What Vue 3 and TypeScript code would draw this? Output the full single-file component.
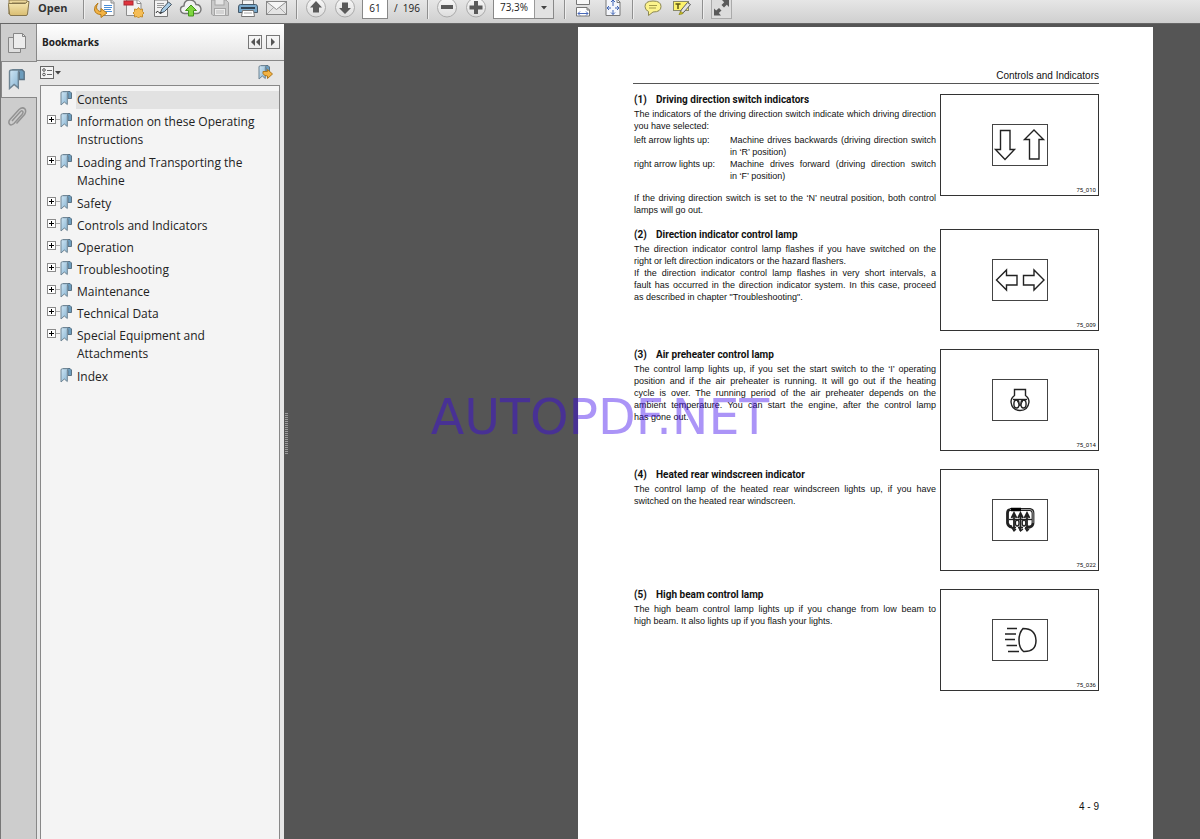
<script setup lang="ts">
import { ref } from 'vue'

interface Bookmark {
  title: string[]
  expandable: boolean
}

interface Term {
  name: string
  lines: string[]
}

interface Section {
  num: number
  title: string
  figure: string
  code: string
  paragraphs: string[][]
  terms?: Term[]
  closing?: string[]
}

const pageNumber = ref('61')
const zoomLevel = ref('73,3%')
const selected = ref(0)

const bookmarks: Bookmark[] = [
  { title: ['Contents'], expandable: false },
  { title: ['Information on these Operating', 'Instructions'], expandable: true },
  { title: ['Loading and Transporting the', 'Machine'], expandable: true },
  { title: ['Safety'], expandable: true },
  { title: ['Controls and Indicators'], expandable: true },
  { title: ['Operation'], expandable: true },
  { title: ['Troubleshooting'], expandable: true },
  { title: ['Maintenance'], expandable: true },
  { title: ['Technical Data'], expandable: true },
  { title: ['Special Equipment and', 'Attachments'], expandable: true },
  { title: ['Index'], expandable: false },
]

const sections: Section[] = [
  {
    num: 1,
    title: 'Driving direction switch indicators',
    figure: 'updown',
    code: '75_010',
    paragraphs: [
      ['The indicators of the driving direction switch indicate which driving direction', 'you have selected:'],
    ],
    terms: [
      { name: 'left arrow lights up:', lines: ['Machine drives backwards (driving direction switch', 'in ‘R’ position)'] },
      { name: 'right arrow lights up:', lines: ['Machine drives forward (driving direction switch', 'in ‘F’ position)'] },
    ],
    closing: ['If the driving direction switch is set to the ‘N’ neutral position, both control', 'lamps will go out.'],
  },
  {
    num: 2,
    title: 'Direction indicator control lamp',
    figure: 'leftright',
    code: '75_009',
    paragraphs: [
      ['The direction indicator control lamp flashes if you have switched on the', 'right or left direction indicators or the hazard flashers.'],
      ['If the direction indicator control lamp flashes in very short intervals, a', 'fault has occurred in the direction indicator system. In this case, proceed', 'as described in chapter "Troubleshooting".'],
    ],
  },
  {
    num: 3,
    title: 'Air preheater control lamp',
    figure: 'preheater',
    code: '75_014',
    paragraphs: [
      ['The control lamp lights up, if you set the start switch to the ‘I’ operating', 'position and if the air preheater is running. It will go out if the heating', 'cycle is over. The running period of the air preheater depends on the', 'ambient temperature. You can start the engine, after the control lamp', 'has gone out.'],
    ],
  },
  {
    num: 4,
    title: 'Heated rear windscreen indicator',
    figure: 'windscreen',
    code: '75_022',
    paragraphs: [
      ['The control lamp of the heated rear windscreen lights up, if you have', 'switched on the heated rear windscreen.'],
    ],
  },
  {
    num: 5,
    title: 'High beam control lamp',
    figure: 'beam',
    code: '75_036',
    paragraphs: [
      ['The high beam control lamp lights up if you change from low beam to', 'high beam. It also lights up if you flash your lights.'],
    ],
  },
]
</script>

<template>
  <div class="app">
    <svg class="defs" aria-hidden="true">
      <defs>
        <linearGradient id="blue" x1="0" y1="0" x2="1" y2="1">
          <stop offset="0" stop-color="#cfe6f4" />
          <stop offset="1" stop-color="#86b3d2" />
        </linearGradient>
        <linearGradient id="folder" x1="0" y1="0" x2="0" y2="1">
          <stop offset="0" stop-color="#f7e9b4" />
          <stop offset="1" stop-color="#d9bd72" />
        </linearGradient>
        <linearGradient id="disc" x1="0" y1="0" x2="0" y2="1">
          <stop offset="0" stop-color="#fafafa" />
          <stop offset="1" stop-color="#dcdcdc" />
        </linearGradient>
        <symbol id="ribbon" viewBox="0 0 12 15">
          <path d="M3 .5H10L11.500 2V7.500H8V2.500Z" fill="#6d9dbd" stroke="#5b7385" />
          <path d="M1 2Q1 .7 2.500 .7H8Q7.300 1.500 7.300 3V13.500L4.300 11L1 14Z" fill="url(#blue)" stroke="#6e8493" />
        </symbol>
      </defs>
    </svg>

    <header class="toolbar">
      <button class="open" type="button">
        <svg width="26" height="20" viewBox="0 0 26 20">
          <path d="M2 0V14L5 3H20V0Z" fill="#ead69a" stroke="#8f7d4f" />
          <path d="M1.500 4.500Q1 3.500 2 3.500H18.500L20.500 1.500H22L20.500 14Q20.300 15.500 19 15.500H4Q2.800 15.500 2.500 14Z" fill="url(#folder)" stroke="#85754c" />
        </svg>
        <span>Open</span>
      </button>
      <span class="sep"></span>
      <div class="group files">
        <button type="button" aria-label="Export">
          <svg width="24" height="20" viewBox="0 0 24 20">
            <path d="M8 0H18.500L21 2.500V15.500H8Z" fill="#fff" stroke="#888" />
            <path d="M18 0V3H21" fill="#ddd" stroke="#888" />
            <path d="M11 5.500H19M11 7.500H19M11 9.500H18M11 11.500H19" stroke="#4c8fd6" />
            <path d="M5 3Q2 8 5 10.500Q6 11.500 8 11.500V8.500L14 13L8 17.500V14.500Q2.500 14.500 1.500 10Q1 6 5 3Z" fill="#f3b344" stroke="#b57b1b" />
          </svg>
        </button>
        <button type="button" aria-label="Create PDF">
          <svg width="24" height="20" viewBox="0 0 24 20">
            <path d="M4.500 0H15L19 3V15.500H4.500Z" fill="#f2f2f2" stroke="#8d8d8d" />
            <path d="M15 0V3.500H19" fill="#fff" stroke="#8d8d8d" />
            <rect x="2" y="1" width="9" height="4" fill="#e0333d" stroke="#ad2730" />
            <path d="M16.500 7.500L18 9.500L20.500 9L20.500 11.500L22 13L20.500 14.500V17L18 16.500L16.500 18L15 16.500L12.500 17V14.500L11 13L12.500 11.500V9L15 9.500Z" fill="#f5bd55" stroke="#c38d2e" />
          </svg>
        </button>
        <button type="button" aria-label="Sign">
          <svg width="24" height="20" viewBox="0 0 24 20">
            <path d="M4.500 0H17.500V16.500H4.500Z" fill="#f3f3f3" stroke="#777" />
            <path d="M7 3.500H14M7 5.500H14M7 7.500H12" stroke="#999" />
            <path d="M10 13.500L12 9L18.500 2L21.500 4.500L14.500 11.500Z" fill="#a8cbe4" stroke="#46535e" />
            <path d="M6 13Q7 10 8.500 12T12 12.500" fill="none" stroke="#333" />
          </svg>
        </button>
        <button type="button" aria-label="Upload to cloud">
          <svg width="24" height="20" viewBox="0 0 24 20">
            <path d="M5.500 13.500Q1.500 13 1.500 9.500Q1.500 6.500 5 6Q5 0 11 0Q16 0 17 4.500Q21.500 4.500 22 9Q22 13 18 13.500Z" fill="#f1f1f1" stroke="#777" stroke-width="1.400" />
            <path d="M12 5L17.500 10.500H14.500V16H9.500V10.500H6.500Z" fill="#7fd63f" stroke="#43951a" />
          </svg>
        </button>
        <button type="button" aria-label="Save" disabled>
          <svg width="24" height="20" viewBox="0 0 24 20">
            <path d="M3.500 0H18L20.500 2.500V15.500H5L3.500 14Z" fill="#c9c9c9" stroke="#a2a2a2" />
            <rect x="7" y="-1" width="9" height="6" fill="#e5e5e5" stroke="#a6a6a6" />
            <rect x="6.500" y="8.500" width="11" height="7" fill="#ececec" stroke="#a6a6a6" />
            <path d="M8 11H16M8 13H16" stroke="#bbb" />
          </svg>
        </button>
        <button type="button" aria-label="Print">
          <svg width="24" height="20" viewBox="0 0 24 20">
            <path d="M6.500 0H17.500V5H6.500Z" fill="#f6f6f6" stroke="#777" />
            <path d="M4.500 4.500H19.500Q21.500 4.500 21.500 7V12.500H2.500V7Q2.500 4.500 4.500 4.500Z" fill="#79a9cc" stroke="#44596a" />
            <path d="M5 8H19" stroke="#304252" stroke-width="2" />
            <path d="M6.500 10.500H17.500L18.500 16.500H5.500Z" fill="#fff" stroke="#777" />
            <path d="M8 13H16" stroke="#aaa" />
          </svg>
        </button>
        <button type="button" aria-label="E-mail">
          <svg width="24" height="20" viewBox="0 0 24 20">
            <rect x="1.500" y="1.500" width="20" height="13" fill="#e4e4e4" stroke="#868686" />
            <path d="M2 14L9 7M21 14L14 7" stroke="#aaa" fill="none" />
            <path d="M2 2L11.500 9.500L21 2" fill="#f5f5f5" stroke="#929292" />
          </svg>
        </button>
      </div>
      <span class="sep"></span>
      <div class="group nav">
        <button type="button" aria-label="Previous page">
          <svg width="24" height="20" viewBox="0 0 24 20">
            <circle cx="12" cy="7.500" r="9.500" fill="url(#disc)" stroke="#aaa" />
            <path d="M12 1L18 7.500H15V12.500H9V7.500H6Z" fill="#5a5a5a" />
          </svg>
        </button>
        <button type="button" aria-label="Next page">
          <svg width="24" height="20" viewBox="0 0 24 20">
            <circle cx="12" cy="7.500" r="9.500" fill="url(#disc)" stroke="#aaa" />
            <path d="M12 14L18 8H15V2.500H9V8H6Z" fill="#5a5a5a" />
          </svg>
        </button>
      </div>
      <input class="page-input" v-model="pageNumber" aria-label="Page number" />
      <span class="total">/&nbsp; 196</span>
      <span class="sep"></span>
      <div class="group nav">
        <button type="button" aria-label="Zoom out">
          <svg width="24" height="20" viewBox="0 0 24 20">
            <circle cx="12" cy="7.500" r="9.500" fill="url(#disc)" stroke="#aaa" />
            <rect x="6" y="5" width="12" height="4" fill="#5a5a5a" />
          </svg>
        </button>
        <button type="button" aria-label="Zoom in">
          <svg width="24" height="20" viewBox="0 0 24 20">
            <circle cx="12" cy="7.500" r="9.500" fill="url(#disc)" stroke="#aaa" />
            <path d="M10 1H14V5.500H18.500V9.500H14V14H10V9.500H5.500V5.500H10Z" fill="#5a5a5a" />
          </svg>
        </button>
      </div>
      <div class="zoom">
        <select v-model="zoomLevel" aria-label="Zoom level">
          <option>73,3%</option>
          <option>100%</option>
        </select>
        <span class="zoom-arrow"><svg width="8" height="4" viewBox="0 0 8 4"><path d="M1 0H7L4 3.500Z" fill="#444" /></svg></span>
      </div>
      <span class="sep"></span>
      <div class="group fit">
        <button type="button" aria-label="Fit width">
          <svg width="24" height="20" viewBox="0 0 24 20">
            <path d="M5.500 -1H18.500V4.500H5.500Z" fill="#f8f8f8" stroke="#777" />
            <path d="M5.500 7.500H16L18.500 10V16H5.500Z" fill="#fff" stroke="#777" />
            <path d="M16 7.500V10H18.500" fill="none" stroke="#777" />
            <path d="M7 13.500H17M9 11.500L7 13.500L9 15.500M15 11.500L17 13.500L15 15.500" fill="none" stroke="#4868b8" />
          </svg>
        </button>
        <button type="button" aria-label="Fit page">
          <svg width="24" height="20" viewBox="0 0 24 20">
            <path d="M5 -1H16L19 2V15.500H5Z" fill="#f4f6fb" stroke="#777" />
            <path d="M16 0V2.500H19" fill="none" stroke="#777" />
            <path d="M12 0V6M12 10V14.500M6 8H10M14 8H18M10 2L12 0L14 2M10 12.500L12 14.500L14 12.500M8 6L6 8L8 10M16 6L18 8L16 10" fill="none" stroke="#3f64b6" />
          </svg>
        </button>
      </div>
      <span class="sep"></span>
      <div class="group notes">
        <button type="button" aria-label="Comment">
          <svg width="24" height="20" viewBox="0 0 24 20">
            <path d="M12 1Q20 1 20 6.500Q20 12 12 12L7.500 15.500V11.500Q4 10 4 6.500Q4 1 12 1Z" fill="#fcf38c" stroke="#8c8752" />
            <path d="M8 5.500H16M8 8H15" stroke="#a39b4a" />
          </svg>
        </button>
        <button type="button" aria-label="Highlight text">
          <svg width="24" height="20" viewBox="0 0 24 20">
            <rect x="3.500" y="1.500" width="15" height="9" fill="#fdf36c" stroke="#8a8a6a" />
            <path d="M5.500 4H10.500M8 4V9" stroke="#5d5512" stroke-width="1.500" />
            <path d="M10 12L12 9L17.500 2.500L20.500 4.500L14 12L11 14Z" fill="#e2e2e2" stroke="#5e5e5e" />
            <path d="M9 14.500L11 11.500L13 13.500Z" fill="#e4d822" stroke="#9a9320" />
          </svg>
        </button>
      </div>
      <span class="sep"></span>
      <button class="full" type="button" aria-label="Full screen">
        <svg width="19" height="18" viewBox="1 0 19 18">
          <path d="M11 0H18V7L15.800 4.800L13 7.500L10.500 5L13.200 2.200Z" fill="#5a5a5a" />
          <path d="M3 8.500L5.200 10.500L8 8L10.500 10.500L7.800 13L10 15.500H3Z" fill="#5a5a5a" />
        </svg>
      </button>
    </header>

    <div class="body">
      <nav class="rail">
        <button type="button" aria-label="Page thumbnails">
          <svg width="20" height="22" viewBox="0 0 20 22">
            <path d="M1.500 5.500H13.500V20.500H1.500Z" fill="#dedede" stroke="#868686" />
            <path d="M6.500 1.500H15.500L18.500 4.500V16.500H6.500Z" fill="#ececec" stroke="#868686" />
            <path d="M15.500 1.500V4.500H18.500" fill="none" stroke="#868686" />
          </svg>
        </button>
        <button class="active" type="button" aria-label="Bookmarks">
          <svg width="17" height="21"><use href="#ribbon" /></svg>
        </button>
        <button type="button" aria-label="Attachments">
          <svg width="20" height="22" viewBox="0 0 20 22">
            <path d="M5 15L13.500 5.500Q15.500 4 16 6Q16.200 7 15 8.500L7 17.500Q4 20 2.500 18Q1 16 3 13.500L12 3.500Q15.500 .5 18 3Q19.500 5.500 17.500 8.500L9.500 17.500" fill="none" stroke="#929292" stroke-width="1.500" />
          </svg>
        </button>
      </nav>

      <aside class="panel">
        <div class="panel-head">
          <h2>Bookmarks</h2>
          <button type="button" aria-label="Collapse panel">
            <svg width="12" height="10" viewBox="0 0 12 10"><path d="M6 1V9L2 5ZM11 1V9L7 5Z" fill="#555" /></svg>
          </button>
          <button type="button" aria-label="Next panel">
            <svg width="12" height="10" viewBox="0 0 12 10"><path d="M4 1V9L8 5Z" fill="#555" /></svg>
          </button>
        </div>
        <div class="panel-tools">
          <button type="button" aria-label="Options">
            <svg width="22" height="14" viewBox="0 0 22 14">
              <rect x=".5" y=".5" width="13" height="12" fill="#f4f4f4" stroke="#666" />
              <circle cx="4" cy="4" r="1.300" fill="none" stroke="#555" />
              <circle cx="4" cy="8.500" r="1.300" fill="none" stroke="#555" />
              <path d="M7 4.500H12M7 8.500H12" stroke="#666" />
              <path d="M15 5H21L18 8.500Z" fill="#444" />
            </svg>
          </button>
          <button type="button" aria-label="Find current bookmark">
            <svg width="16" height="16" viewBox="0 0 16 16">
              <use href="#ribbon" width="12" height="15" />
              <path d="M5 6.500H9.500V4.500L14.500 9L9.500 13.500V11Q6 11 5 8.500Z" fill="#f3b344" stroke="#ae771c" />
            </svg>
          </button>
        </div>
        <ul class="tree">
          <li v-for="(b, i) in bookmarks" :key="i" :class="{ selected: i === selected, tall: b.title.length > 1 }">
            <span class="branch">
              <button v-if="b.expandable" type="button" :aria-label="'Expand ' + b.title.join(' ')">
                <svg width="13" height="9" viewBox="0 0 13 9">
                  <rect x=".5" y=".5" width="8" height="8" fill="#fff" stroke="#8b8b8b" />
                  <path d="M2 4.500H7M4.500 2V7" stroke="#000" />
                  <path d="M9 4.500H13" stroke="#aaa" />
                </svg>
              </button>
            </span>
            <svg class="mark" width="12" height="15"><use href="#ribbon" /></svg>
            <a href="#" @click.prevent="selected = i"><span v-for="l in b.title" :key="l">{{ l }}</span></a>
          </li>
        </ul>
      </aside>

      <main class="viewer">
        <span class="grip"></span>
        <article class="page">
          <p class="running">Controls and Indicators</p>
          <section v-for="s in sections" :key="s.num">
            <div class="copy">
              <h3><span>({{ s.num }})</span>{{ s.title }}</h3>
              <p v-for="(p, i) in s.paragraphs" :key="i">
                <span v-for="l in p" :key="l">{{ l }}</span>
              </p>
              <dl v-if="s.terms">
                <template v-for="t in s.terms" :key="t.name">
                  <dt>{{ t.name }}</dt>
                  <dd><span v-for="l in t.lines" :key="l">{{ l }}</span></dd>
                </template>
              </dl>
              <p v-if="s.closing" class="closing">
                <span v-for="l in s.closing" :key="l">{{ l }}</span>
              </p>
            </div>
            <figure>
              <svg width="56" height="42" viewBox="0 0 56 42" fill="none" stroke="#222">
                <rect x=".5" y=".5" width="55" height="41" stroke="#444" />
                <g v-if="s.figure === 'updown'" stroke-width="1.400">
                  <path d="M8.500 6.500H18V25.500H22.500L13 35.500L3.500 25.500H8.500Z" />
                  <path d="M42 6L51.500 15.500H47V35H37.500V15.500H32.500Z" />
                </g>
                <g v-else-if="s.figure === 'leftright'" stroke-width="1.400">
                  <path d="M4.500 21L14.500 11V16.500H25V26H14.500V31Z" />
                  <path d="M52 21L42 11V16.500H31.500V26H42V31Z" />
                </g>
                <g v-else-if="s.figure === 'preheater'" stroke-width="1.400">
                  <path d="M22.500 16.500V10.500H33.500V16.500Q37 19 37 23Q36 31.500 28 31.500Q20 31.500 19 23Q19 19 22.500 16.500Z" />
                  <path d="M21 20.500H35" />
                  <ellipse cx="24.500" cy="25" rx="2.600" ry="4" />
                  <ellipse cx="31.500" cy="25" rx="2.600" ry="4" />
                  <path d="M24.500 20.500L28 27L31.500 20.500" stroke-width="1" />
                </g>
                <g v-else-if="s.figure === 'windscreen'" stroke-width="1.300">
                  <path d="M18 10.500H38Q41 11 41 14V24Q41 27 38 28H35M20 28Q16 27.500 15.500 24V14Q15.500 11 18 10.500" stroke-width="2.800" />
                  <path d="M18 10.500H38Q41 11 41 14V24" stroke="#bbb" stroke-width=".8" />
                  <path d="M22 32V14M19.500 19L22 14L24.500 19M28.500 32V14M26 19L28.500 14L31 19M35 32V14M32.500 19L35 14L37.500 19" stroke-width="1.800" />
                  <path d="M17 20.500H40" />
                  <ellipse cx="25.200" cy="24" rx="1.800" ry="3" />
                  <ellipse cx="32" cy="24" rx="1.800" ry="3" />
                  <path d="M19 28.500H24M26 28.500H31M33 28.500H38M20 29L22 32L24 30M27 29L28.500 32L31 30M33 29L35 32L37 30" />
                  <path d="M19 10.500H29" stroke="#000" stroke-width="3.500" />
                </g>
                <g v-else stroke-width="1.500">
                  <path d="M31 9.500Q27 14 27 21Q27 29 31.500 32.500Q44 33 44 21.500Q43.500 9.500 31 9.500Z" />
                  <path d="M15 9.500H25M13 15H24M13 20.500H23M14.500 26.500H25M16 32.500H27" />
                </g>
              </svg>
              <figcaption>{{ s.code }}</figcaption>
            </figure>
          </section>
          <footer>4 - 9</footer>
        </article>
      </main>
    </div>
    <div class="watermark">AUTOPDF.NET</div>
  </div>
</template>

<style>
body {
  margin: 0;
}
</style>

<style scoped>
.app {
  position: relative;
  display: flex;
  flex-direction: column;
  min-height: 100vh;
  font-family: "Open Sans", "Noto Sans", sans-serif;
  color: #222;
  background: #555;
}
.defs {
  position: absolute;
  width: 0;
  height: 0;
}
button {
  margin: 0;
  padding: 0;
  border: 0;
  background: none;
  font: inherit;
  color: inherit;
}
svg {
  display: block;
}
.toolbar {
  display: flex;
  align-items: flex-start;
  height: 23px;
  overflow: hidden;
  padding-left: 7px;
  border-bottom: 1px solid #666;
  background: linear-gradient(#e6e6e6, #cfcfcf);
  font-size: 11px;
  line-height: 16px;
}
.open {
  display: flex;
  width: 76px;
  gap: 5px;
  font-weight: 700;
  color: #333;
}
.sep {
  flex: none;
  width: 1px;
  height: 19px;
  background: #8f8f8f;
  border-right: 1px solid #eee;
}
.group {
  display: grid;
  grid-auto-flow: column;
  grid-auto-columns: 1fr;
  justify-items: center;
}
.files {
  width: 200px;
  margin: 0 5px 0 6px;
}
.nav {
  width: 57px;
  margin: 0 3px 0 4px;
}
.page-input {
  box-sizing: border-box;
  width: 26px;
  height: 19px;
  padding: 0 0 3px;
  border: 1px solid #888;
  border-top: 0;
  background: #fff;
  font: 10px/15px "Open Sans", sans-serif;
  text-align: center;
  color: #222;
}
.total {
  width: 33px;
  padding-left: 6px;
  font-size: 10px;
}
.zoom {
  display: flex;
  box-sizing: border-box;
  width: 61px;
  height: 19px;
  margin-right: 10px;
  border: 1px solid #888;
  border-top: 0;
  background: #fff;
}
.zoom select {
  flex: 1;
  min-width: 0;
  padding: 0 0 3px 6px;
  border: 0;
  appearance: none;
  background: none;
  font: 10px/15px "Open Sans", sans-serif;
  color: #222;
}
.zoom-arrow {
  display: grid;
  place-items: center;
  width: 18px;
  padding-bottom: 2px;
  border-left: 1px solid #999;
  background: #e2e2e2;
}
.fit {
  width: 60px;
  margin: 0 4px 0 2px;
}
.notes {
  width: 58px;
  margin: 0 6px 0 4px;
}
.full {
  margin-left: 7px;
  border: 1px solid #aaa;
  border-top: 0;
  background: #dcdcdc;
}
.body {
  display: flex;
  flex: 1;
}
.rail {
  flex: none;
  box-sizing: border-box;
  width: 37px;
  border-left: 1px solid #777;
  border-right: 1px solid #888;
  background: #cdcdcd;
}
.rail button {
  display: grid;
  place-items: center;
  width: 32px;
  height: 37px;
}
.rail .active {
  box-sizing: border-box;
  width: 36px;
  padding-right: 6px;
  border: 1px solid #888;
  border-right: 0;
  background: #e6e6e6;
}
.panel {
  display: flex;
  flex: none;
  flex-direction: column;
  width: 247px;
  background: #e6e6e6;
}
.panel-head {
  display: flex;
  align-items: center;
  gap: 4px;
  height: 36px;
  padding: 0 4px 0 5px;
  border-bottom: 1px solid #888;
  background: linear-gradient(#fff, #e4e4e4);
}
h2 {
  flex: 1;
  margin: 0;
  font-size: 10px;
  line-height: 16px;
}
.panel-head button {
  padding: 1px 0;
  border: 1px solid #777;
}
.panel-tools {
  display: flex;
  align-items: center;
  justify-content: space-between;
  height: 24px;
  padding: 0 10px 0 3px;
}
.tree {
  flex: 1;
  margin: 0 4px 0 3px;
  padding: 5px 0 0;
  border: 1px solid #888;
  border-bottom: 0;
  background: #f4f4f4;
  list-style: none;
  font-size: 12px;
  line-height: 18px;
}
.tree li {
  display: flex;
  align-items: flex-start;
  margin-bottom: 4px;
}
.tree .tall {
  margin-bottom: 5px;
}
.branch {
  width: 13px;
  margin-left: 6px;
  padding-top: 2px;
}
.branch button {
  display: block;
}
.mark {
  flex: none;
}
.tree a {
  flex: 1;
  margin-left: 4px;
  padding-left: 1px;
  color: #222;
  text-decoration: none;
}
.tree a span {
  display: block;
  white-space: nowrap;
}
.selected a {
  background: #e2e2e2;
}
.viewer {
  position: relative;
  display: grid;
  flex: 1;
  grid-template-columns: 294fr 575fr 47fr;
  padding-top: 3px;
}
.grip {
  position: absolute;
  top: 389px;
  left: 1px;
  width: 3px;
  height: 41px;
  background: repeating-linear-gradient(#999 0 1px, #555 1px 2px);
}
.page {
  display: flex;
  grid-column: 2;
  flex-direction: column;
  padding: 43px 54px 26px 55px;
  background: #fff;
  font: 9px/12px "Liberation Sans", Arial, sans-serif;
  color: #111;
}
.page p,
.page h3,
.page dl,
.page dd,
.page figure {
  margin: 0;
}
.page .running {
  margin-bottom: 10px;
  border-bottom: 1px solid #555;
  padding-bottom: 1px;
  font-size: 10px;
  text-align: right;
}
section {
  display: flex;
  align-items: flex-start;
  justify-content: space-between;
}
.copy {
  width: 302px;
  padding: 0 0 13px 1px;
}
.page h3 {
  display: flex;
  padding-bottom: 2px;
  font: 700 10px/12px Roboto, "Liberation Sans", sans-serif;
}
h3 span {
  width: 22px;
}
.copy p span,
dd span {
  display: block;
  text-align-last: justify;
  white-space: nowrap;
}
.copy p span:last-child,
dd span:last-child {
  text-align-last: left;
}
dl {
  display: grid;
  grid-template-columns: 96px 1fr;
  padding-top: 2px;
}
.page .closing {
  padding-top: 10px;
}
figure {
  display: grid;
  box-sizing: border-box;
  width: 159px;
  height: 102px;
  border: 1px solid #333;
  place-items: center;
}
.page figure {
  margin-bottom: 18px;
}
figure svg,
figcaption {
  grid-area: 1 / 1;
}
figcaption {
  place-self: end;
  padding-right: 2px;
  font: 6px/10px Roboto, sans-serif;
}
footer {
  margin-top: auto;
  font-size: 10px;
  text-align: right;
}
.watermark {
  position: absolute;
  top: 383px;
  left: 0;
  width: 100%;
  font: 49px/70px "DejaVu Sans", sans-serif;
  text-align: center;
  color: rgba(55, 0, 235, 0.42);
  pointer-events: none;
}
</style>
